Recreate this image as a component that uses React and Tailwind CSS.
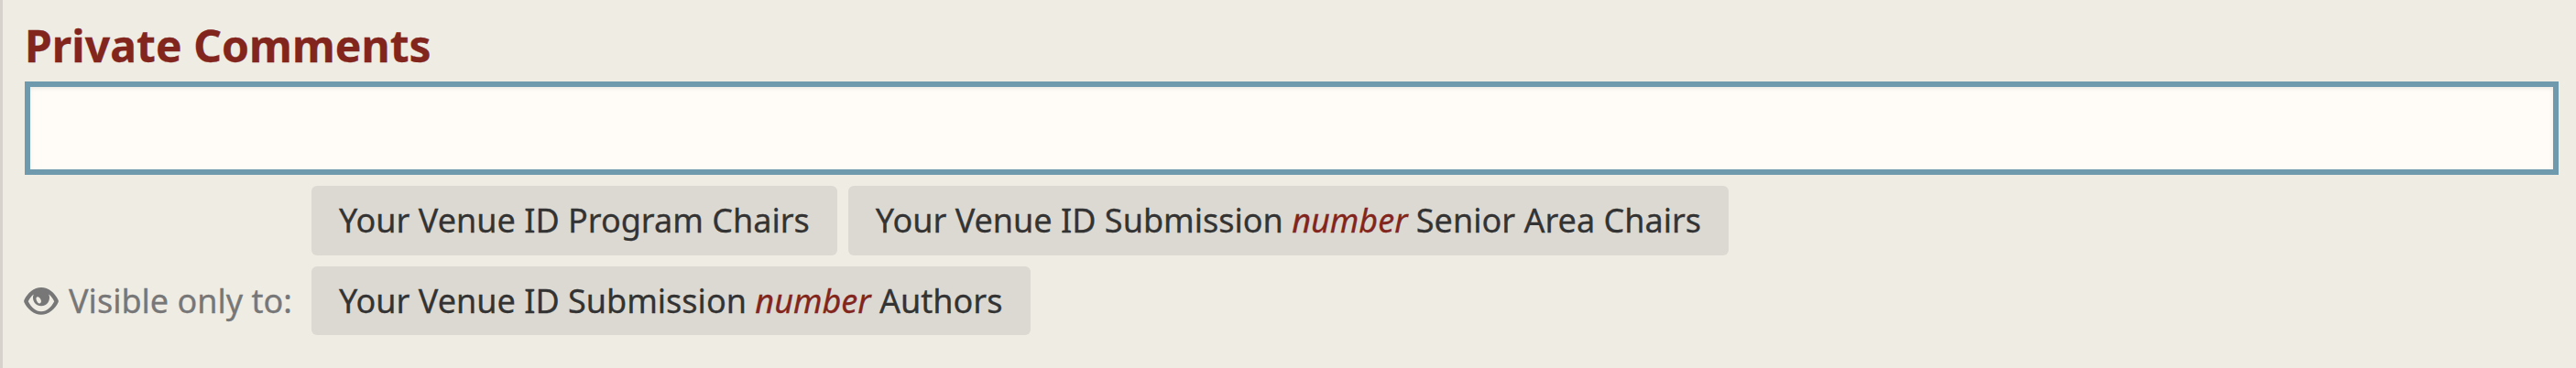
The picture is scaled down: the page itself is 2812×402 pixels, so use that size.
import React from "react";

function Group({ children, className }) {
  return (
    <span className={`flex items-center whitespace-pre rounded-[6px] bg-[#dcd9d2] px-[30px] text-[#333333] ${className}`}>
      <span>{children}</span>
    </span>
  );
}

function Num() {
  return <em className="italic text-[#82251c]">number</em>;
}

function Eye() {
  return (
    <svg viewBox="0 0 38 30" className="h-[30px] w-[38px] shrink-0" fill="#777777">
      <path
        fillRule="evenodd"
        d="M.3 14C4 6 11 0 19 0S34 6 37.7 14Q38 15 37.7 16C34 24 27 29.7 19 29.7S4 24 .3 16Q0 15 .3 14ZM4.8 15.3C8.5 22.3 13 26.2 19 26.2S29.5 22.3 33.2 15.3C31.8 12.2 29.8 9.5 27.2 7.6A9 9 0 1 1 10.8 7.6C8.2 9.5 6.2 12.2 4.8 15.3Z"
      />
      <ellipse cx="16.2" cy="13.8" rx="2.3" ry="3.8" transform="rotate(-25 16.2 13.8)" fill="#efece4" />
    </svg>
  );
}

export default function App() {
  return (
    <main className="h-[402px] w-[2812px] overflow-hidden border-l-[3px] border-[#d7d3cc] bg-[#efece4] pl-6 pr-[19px] pt-4 font-['Noto_Sans',sans-serif] text-[36px] [-webkit-text-stroke:0.3px]">
      <h1 className="h-[73px] text-[48px] font-bold leading-[68px] tracking-[0.05px] text-[#82251c]">Private Comments</h1>
      <div className="h-[102px] border-[6px] border-[#6f99ad] bg-[#fffcf7] shadow-[inset_0_2px_4px_rgba(0,0,0,0.075)]" />
      <div className="mt-3 flex items-end">
        <div className="-ml-px flex h-[75px] w-[314px] items-center gap-[11px] text-[#777777]">
          <Eye />
          <span className="whitespace-nowrap">Visible only to:</span>
        </div>
        <div className="flex flex-col gap-3">
          <div className="flex gap-3">
            <Group className="h-[76px]">Your Venue ID Program Chairs</Group>
            <Group className="h-[76px]">Your Venue ID Submission <Num /> Senior Area Chairs</Group>
          </div>
          <div className="flex">
            <Group className="h-[75px] w-[785px]">Your Venue ID Submission <Num /> Authors</Group>
          </div>
        </div>
      </div>
    </main>
  );
}
